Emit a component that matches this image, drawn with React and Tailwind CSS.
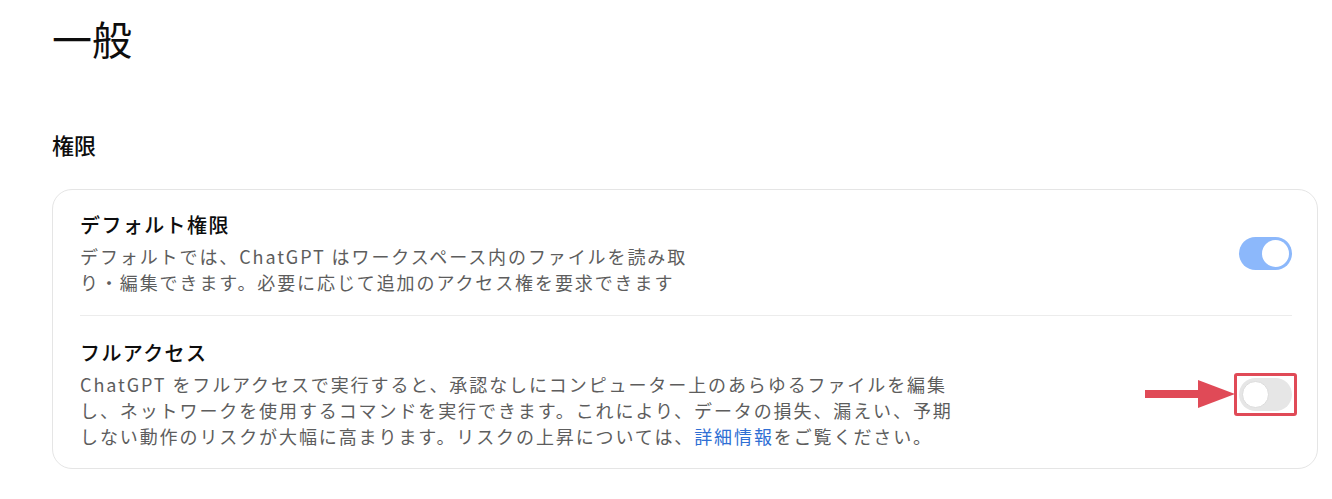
import React from 'react';

const Toggle = ({ on }) => (
    <div
        className={`relative h-[33px] w-[53px] shrink-0 rounded-full ${on ? 'bg-[#8cb8fb]' : 'bg-[#e6e6e6]'}`}
    >
        <div
            className={`absolute top-[3px] h-[27px] w-[27px] rounded-full bg-white ${
                on ? 'right-[3px]' : 'left-[3px] border border-[#dcdcdc]'
            }`}
        />
    </div>
);

const App = () => {
    return (
        <div className="min-h-screen bg-white pl-[52px] pr-[14px] pt-[10px] font-['Noto_Sans_CJK_JP','Noto_Sans',sans-serif] text-[#0d0d0d]">
            <h1 className="text-[40px] leading-[56px] font-normal">一般</h1>

            <h2 className="mt-[62px] text-[22px] leading-[32px] font-medium">権限</h2>

            <div className="mt-[29px] rounded-[20px] border border-[#e5e5e5] pl-[27px] pr-[25px]">
                {/* default permission */}
                <div className="flex items-center justify-between border-b border-[#ececec] pt-[21px] pb-[20px]">
                    <div>
                        <div className="text-[20px] leading-[28px] font-medium tracking-[1.4px]">デフォルト権限</div>
                        <p className="mt-[4px] text-[18px] leading-[26px] tracking-[1.9px] text-[#5d5d5d]">
                            デフォルトでは、ChatGPT はワークスペース内のファイルを読み取
                            <br />
                            り・編集できます。必要に応じて追加のアクセス権を要求できます
                        </p>
                    </div>
                    <Toggle on />
                </div>

                {/* full access */}
                <div className="flex items-center justify-between pt-[23px] pb-[19px]">
                    <div>
                        <div className="text-[20px] leading-[28px] font-medium tracking-[1.4px]">フルアクセス</div>
                        <p className="mt-[4px] text-[18px] leading-[26px] tracking-[1.9px] text-[#5d5d5d]">
                            ChatGPT をフルアクセスで実行すると、承認なしにコンピューター上のあらゆるファイルを編集
                            <br />
                            し、ネットワークを使用するコマンドを実行できます。これにより、データの損失、漏えい、予期
                            <br />
                            しない動作のリスクが大幅に高まります。リスクの上昇については、
                            <a href="#" className="text-[#2f6fd4]">詳細情報</a>
                            をご覧ください。
                        </p>
                    </div>
                    <div className="relative">
                        <Toggle on={false} />
                        {/* highlight box */}
                        <div className="absolute -inset-[5px] rounded-[3px] border-[3px] border-[#e04a57]" />
                        {/* arrow */}
                        <svg
                            className="absolute right-[calc(100%+4px)] top-1/2 -translate-y-1/2"
                            width="90"
                            height="28"
                            viewBox="0 0 90 28"
                        >
                            <rect x="0" y="10" width="56" height="8" fill="#e04a57" />
                            <polygon points="53,0 90,14 53,28" fill="#e04a57" />
                        </svg>
                    </div>
                </div>
            </div>
        </div>
    );
};

export default App;
